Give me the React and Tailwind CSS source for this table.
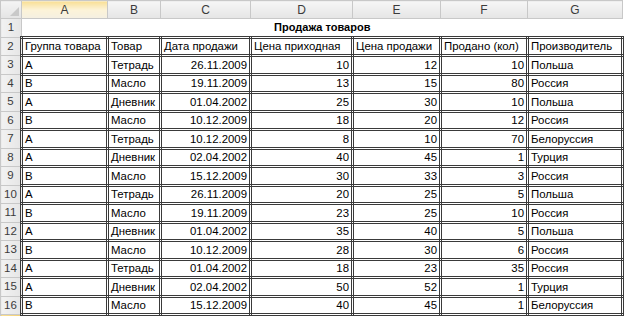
import React from "react";

const COLS = ["A", "B", "C", "D", "E", "F", "G"];
const WIDTHS = [21, 86, 53, 90, 102, 88, 87, 95];

const HEAD = [
  "Группа товара",
  "Товар",
  "Дата продажи",
  "Цена приходная",
  "Цена продажи",
  "Продано (кол)",
  "Производитель",
];

const ROWS = [
  ["A", "Тетрадь", "26.11.2009", 10, 12, 10, "Польша"],
  ["B", "Масло", "19.11.2009", 13, 15, 80, "Россия"],
  ["A", "Дневник", "01.04.2002", 25, 30, 10, "Польша"],
  ["B", "Масло", "10.12.2009", 18, 20, 12, "Россия"],
  ["A", "Тетрадь", "10.12.2009", 8, 10, 70, "Белоруссия"],
  ["A", "Дневник", "02.04.2002", 40, 45, 1, "Турция"],
  ["B", "Масло", "15.12.2009", 30, 33, 3, "Россия"],
  ["A", "Тетрадь", "26.11.2009", 20, 25, 5, "Польша"],
  ["B", "Масло", "19.11.2009", 23, 25, 10, "Россия"],
  ["A", "Дневник", "01.04.2002", 35, 40, 5, "Польша"],
  ["B", "Масло", "10.12.2009", 28, 30, 6, "Россия"],
  ["A", "Тетрадь", "01.04.2002", 18, 23, 35, "Россия"],
  ["A", "Дневник", "02.04.2002", 50, 52, 1, "Турция"],
  ["B", "Масло", "15.12.2009", 40, 45, 1, "Белоруссия"],
];

const rowHead =
  "border border-[#c8c8c8] bg-linear-to-r from-[#f2f2f2] to-[#e6e6e6] text-center text-[11.5px] text-[#3b3b3b] font-normal p-0 leading-none";
const cell =
  "border-[3px] border-double border-[#3a3a3a] px-[2px] pt-[1px] pb-0 whitespace-nowrap overflow-hidden text-[11.4px] text-black leading-none";

function App() {
  return (
    <div
      className="w-[624px] h-[316px] overflow-hidden bg-white"
      style={{ fontFamily: '"Liberation Sans", Arial, sans-serif' }}
    >
      <table className="table-fixed border-collapse w-[622px]">
        <colgroup>
          {WIDTHS.map((w, i) => (
            <col key={i} style={{ width: w }} />
          ))}
        </colgroup>
        <thead>
          <tr className="h-[18px]">
            <th className="border border-[#c8c8c8] bg-linear-to-b from-[#f4f4f4] to-[#e4e4e4] p-0 relative">
              <svg
                width="9"
                height="9"
                viewBox="0 0 9 9"
                className="absolute right-[2px] bottom-[2px]"
              >
                <polygon points="9,0 9,9 0,9" fill="#c9c9c9" />
              </svg>
            </th>
            {COLS.map((c, i) => (
              <th
                key={c}
                className={`border border-[#c8c8c8] p-0 text-center text-[12px] font-normal text-[#3b3b3b] leading-none ${
                  i === 0
                    ? "bg-linear-to-b from-[#f9df93] via-[#fcf3d8] to-[#f4efe2]"
                    : "bg-linear-to-b from-[#f6f6f6] to-[#e5e5e5]"
                }`}
              >
                {c}
              </th>
            ))}
          </tr>
        </thead>
        <tbody>
          <tr className="h-[18.5px]">
            <td className={rowHead}>1</td>
            <td
              colSpan={7}
              className="p-0 pt-[1px] text-center text-[11px] font-bold text-black leading-none"
            >
              Продажа товаров
            </td>
          </tr>
          <tr className="h-[18.5px]">
            <td className={rowHead}>2</td>
            {HEAD.map((h) => (
              <td key={h} className={cell}>
                {h}
              </td>
            ))}
          </tr>
          {ROWS.map((r, i) => (
            <tr key={i} className="h-[18.5px]">
              <td className={rowHead}>{i + 3}</td>
              {r.map((v, j) => (
                <td
                  key={j}
                  className={`${cell} ${
                    j >= 2 && j <= 5 ? "text-right" : "text-left"
                  }`}
                >
                  {v}
                </td>
              ))}
            </tr>
          ))}
          {/* row 17: active row, only its top edge shows */}
          <tr className="h-[18.5px]">
            <td className="border border-[#c8c8c8] bg-linear-to-r from-[#f9df93] to-[#f3cf72] p-0"></td>
            <td colSpan={7} className="border border-[#d9d9d9] p-0"></td>
          </tr>
        </tbody>
      </table>
    </div>
  );
}

export default App;
